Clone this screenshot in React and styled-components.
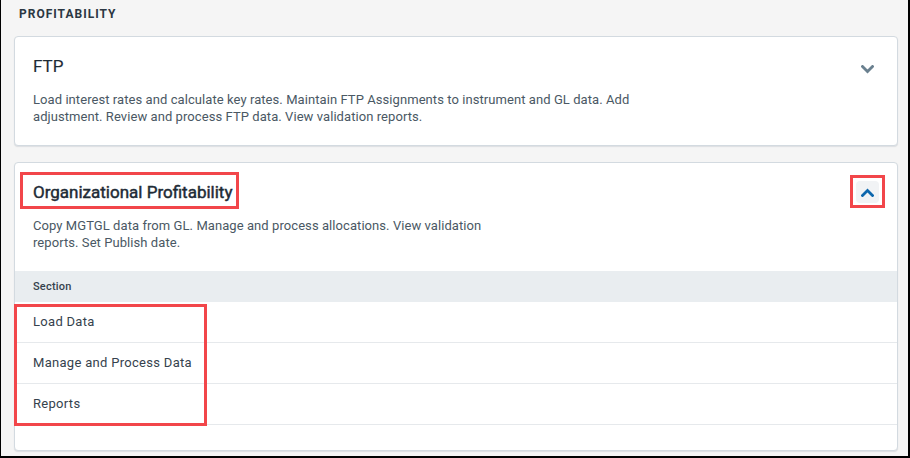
import React from "react";
import styled, { createGlobalStyle, css } from "styled-components";

const GlobalStyle = createGlobalStyle`
  html, body { margin: 0; padding: 0; }
  body {
    font-family: Roboto, "Liberation Sans", Arial, sans-serif;
    background: #f5f5f5;
  }
  * { box-sizing: border-box; }
`;

const Page = styled.div`
  width: 910px;
  height: 458px;
  overflow: hidden;
  background: #f5f5f5;
  border-left: 1px solid #000;
  border-right: 2px solid #000;
  border-bottom: 2px solid #000;
  padding: 0 10px 0 13px;
  display: flex;
  flex-direction: column;
`;

const Heading = styled.h2`
  margin: 6px 0 14px 5px;
  font-size: 12px;
  line-height: 16px;
  font-weight: 700;
  letter-spacing: 1px;
  text-transform: uppercase;
  color: #2b3742;
`;

const Cards = styled.div`
  display: flex;
  flex-direction: column;
  gap: 16px;
`;

const Card = styled.section`
  background: #fff;
  border: 1px solid #d3dae0;
  border-radius: 4px;
  box-shadow: 0 1px 1px rgba(40, 60, 80, 0.12);
  display: flex;
  flex-direction: column;
  padding-bottom: ${(p) => (p.$expanded ? "25px" : "0")};
`;

const Header = styled.div`
  display: flex;
  justify-content: space-between;
  align-items: flex-start;
  padding: 17px 18px 0 18px;
`;

const Title = styled.h3`
  position: relative;
  display: inline-block;
  margin: 0;
  font-size: 17px;
  line-height: 24px;
  font-weight: 400;
  -webkit-text-stroke: ${(p) => (p.$bold ? "0.45px" : "0.15px")} currentColor;
  color: #1e2b36;
  ${(p) =>
    p.$marked &&
    css`
      &::after {
        content: "";
        position: absolute;
        left: -13px;
        top: -8px;
        right: -7px;
        bottom: -5px;
        border: 3px solid #f2464a;
      }
    `}
`;

const ToggleButton = styled.button`
  position: relative;
  width: 23px;
  height: 22px;
  margin-top: 1px;
  border: none;
  border-radius: 4px;
  padding: 0;
  display: flex;
  align-items: center;
  justify-content: center;
  background: ${(p) => (p.$active ? "#f1f3f5" : "transparent")};
  color: ${(p) => (p.$active ? "#0d67ad" : "#6a808f")};
  ${(p) =>
    p.$marked &&
    css`
      &::after {
        content: "";
        position: absolute;
        left: -6px;
        top: -6px;
        right: -6px;
        bottom: -5px;
        border: 3px solid #f2464a;
      }
    `}
`;

const ChevronSvg = styled.svg`
  display: block;
  margin-top: ${(p) => (p.$down ? "6px" : "0")};
`;

const Description = styled.p`
  margin: 13px 0 0 0;
  padding: 0 18px 20px 18px;
  font-size: 13px;
  line-height: 17px;
  letter-spacing: 0.07px;
  color: #4a5864;
  white-space: nowrap;
`;

const SectionHeader = styled.div`
  height: 31px;
  background: #e9edf0;
  display: flex;
  align-items: center;
  padding: 0 18px;
  font-size: 11px;
  font-weight: 500;
  letter-spacing: 0.2px;
  color: #35424d;
`;

const Rows = styled.div`
  position: relative;
  display: flex;
  flex-direction: column;
`;

const RowsMark = styled.div`
  position: absolute;
  left: -1px;
  top: 2px;
  width: 193px;
  height: 122px;
  border: 3px solid #f2464a;
  pointer-events: none;
`;

const Row = styled.div`
  height: 41px;
  border-bottom: 1px solid #e6e9ec;
  display: flex;
  align-items: center;
  padding: 0 18px 2px 18px;
  font-size: 13px;
  letter-spacing: 0.3px;
  color: #35424d;
`;

const Chevron = ({ up }) => (
  <ChevronSvg width="13" height="9" viewBox="0 0 13 9" $down={!up}>
    <polyline
      points={up ? "1.5,7.5 6.5,2.5 11.5,7.5" : "1.5,1.5 6.5,6.5 11.5,1.5"}
      fill="none"
      stroke="currentColor"
      strokeWidth="2.8"
      strokeLinecap="square"
    />
  </ChevronSvg>
);

const sections = ["Load Data", "Manage and Process Data", "Reports"];

export default function App() {
  return (
    <>
      <GlobalStyle />
      <Page>
        <Heading>Profitability</Heading>
        <Cards>
          <Card>
            <Header>
              <Title>FTP</Title>
              <ToggleButton aria-label="Expand">
                <Chevron />
              </ToggleButton>
            </Header>
            <Description>
              Load interest rates and calculate key rates. Maintain FTP Assignments to instrument and GL data. Add
              <br />
              adjustment. Review and process FTP data. View validation reports.
            </Description>
          </Card>
          <Card $expanded>
            <Header>
              <Title $bold $marked>
                Organizational Profitability
              </Title>
              <ToggleButton $active $marked aria-label="Collapse">
                <Chevron up />
              </ToggleButton>
            </Header>
            <Description>
              Copy MGTGL data from GL. Manage and process allocations. View validation
              <br />
              reports. Set Publish date.
            </Description>
            <SectionHeader>Section</SectionHeader>
            <Rows>
              {sections.map((s) => (
                <Row key={s}>{s}</Row>
              ))}
              <RowsMark />
            </Rows>
          </Card>
        </Cards>
      </Page>
    </>
  );
}
